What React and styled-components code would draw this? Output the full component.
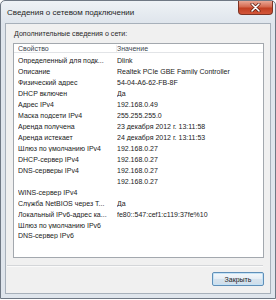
import React from 'react';
import styled, { createGlobalStyle } from 'styled-components';

const GlobalStyle = createGlobalStyle`
    html, body {
        margin: 0;
        padding: 0;
        background: #ffffff;
    }
    body {
        font-family: "Liberation Sans", Arial, sans-serif;
    }
`;

const Window = styled.div`
    width: 276px;
    height: 299px;
    box-sizing: border-box;
    border: 1px solid #6f7884;
    border-radius: 5px 5px 0 0;
    background: linear-gradient(#eef2f6 0px, #dfe5ec 22px, #dfe5ec 100%);
    display: flex;
    flex-direction: column;
    padding: 0 4px 4px;
`;

const TitleBar = styled.div`
    height: 22px;
    display: flex;
    justify-content: space-between;
    align-items: flex-start;
    flex-shrink: 0;

    .title {
        font-size: 8px;
        color: #1f1f1f;
        padding: 7px 0 0 2px;
        white-space: nowrap;
    }
`;

const CloseButton = styled.div`
    width: 35px;
    height: 14px;
    margin: 0 -2px 0 0;
    box-sizing: border-box;
    border: 1px solid #7d3324;
    border-top: none;
    border-radius: 0 0 4px 4px;
    background: linear-gradient(#e9a795 0%, #d4694f 45%, #c13f22 55%, #d3563a 100%);
    display: flex;
    align-items: center;
    justify-content: center;
`;

const Client = styled.div`
    flex: 1;
    border: 1px solid #a7b0ba;
    background: #f0f0f0;
    display: flex;
    flex-direction: column;
    padding: 5px 6px 7px 7px;
`;

const Caption = styled.div`
    font-size: 7.1px;
    line-height: 10px;
    color: #2a2a2a;
    padding-left: 1px;
    white-space: nowrap;
`;

const ListBox = styled.div`
    margin-top: 4px;
    height: 215px;
    box-sizing: border-box;
    border: 1px solid #a3a8ae;
    background: #ffffff;
    overflow: hidden;
`;

const Row = styled.div`
    display: grid;
    grid-template-columns: 99px 1fr;
    height: ${({ header }) => (header ? '8px' : '10.94px')};
    align-items: center;
    font-size: 7px;
    color: ${({ header }) => (header ? '#3c4650' : '#222222')};
    padding-left: 4px;
    border-bottom: ${({ header }) => (header ? '1px solid #e2e4e7' : 'none')};
    margin-bottom: ${({ header }) => (header ? '2.5px' : '0')};
    white-space: nowrap;

    span {
        overflow: hidden;
    }
    .name {
        border-right: ${({ header }) => (header ? '1px solid #eceef0' : 'none')};
    }
`;

const Separator = styled.div`
    margin: 7px 1px 0 -6px;
    height: 1px;
    background: #d4d6d9;
    border-bottom: 1px solid #fafafa;
`;

const Footer = styled.div`
    display: flex;
    justify-content: flex-end;
    margin-top: 5px;
`;

const Button = styled.button`
    width: 52px;
    height: 14px;
    padding: 0;
    border: 1px solid #5f8fb8;
    border-radius: 2px;
    background: linear-gradient(#f4f8fb 0%, #e6eef5 48%, #d6e3ee 52%, #cfdde9 100%);
    box-shadow: inset 0 0 0 1px #c4e2f6;
    font-family: "Liberation Sans", Arial, sans-serif;
    font-size: 7px;
    color: #1c1c1c;
`;

const rows = [
    ['Определенный для подк...', 'Dlink'],
    ['Описание', 'Realtek PCIe GBE Family Controller'],
    ['Физический адрес', '54-04-A6-62-FB-8F'],
    ['DHCP включен', 'Да'],
    ['Адрес IPv4', '192.168.0.49'],
    ['Маска подсети IPv4', '255.255.255.0'],
    ['Аренда получена', '23 декабря 2012 г. 13:11:58'],
    ['Аренда истекает', '24 декабря 2012 г. 13:11:53'],
    ['Шлюз по умолчанию IPv4', '192.168.0.27'],
    ['DHCP-сервер IPv4', '192.168.0.27'],
    ['DNS-серверы IPv4', '192.168.0.27'],
    ['', '192.168.0.27'],
    ['WINS-сервер IPv4', ''],
    ['Служба NetBIOS через Т...', 'Да'],
    ['Локальный IPv6-адрес ка...', 'fe80::547:cef1:c119:37fe%10'],
    ['Шлюз по умолчанию IPv6', ''],
    ['DNS-сервер IPv6', ''],
];

const CloseIcon = () => (
    <svg width="11" height="9" viewBox="0 0 11 9">
        <path d="M2 1 L9 8 M9 1 L2 8" stroke="#5a1a0e" strokeWidth="3" strokeLinecap="round" />
        <path d="M2 1 L9 8 M9 1 L2 8" stroke="#ffffff" strokeWidth="1.6" strokeLinecap="round" />
    </svg>
);

const App = () => (
    <>
        <GlobalStyle />
        <Window>
            <TitleBar>
                <div className="title">Сведения о сетевом подключении</div>
                <CloseButton>
                    <CloseIcon />
                </CloseButton>
            </TitleBar>
            <Client>
                <Caption>Дополнительные сведения о сети:</Caption>
                <ListBox>
                    <Row header>
                        <span className="name">Свойство</span>
                        <span className="value">Значение</span>
                    </Row>
                    {rows.map(([name, value], i) => (
                        <Row key={i}>
                            <span className="name">{name}</span>
                            <span className="value">{value}</span>
                        </Row>
                    ))}
                </ListBox>
                <Separator />
                <Footer>
                    <Button>Закрыть</Button>
                </Footer>
            </Client>
        </Window>
    </>
);

export default App;
